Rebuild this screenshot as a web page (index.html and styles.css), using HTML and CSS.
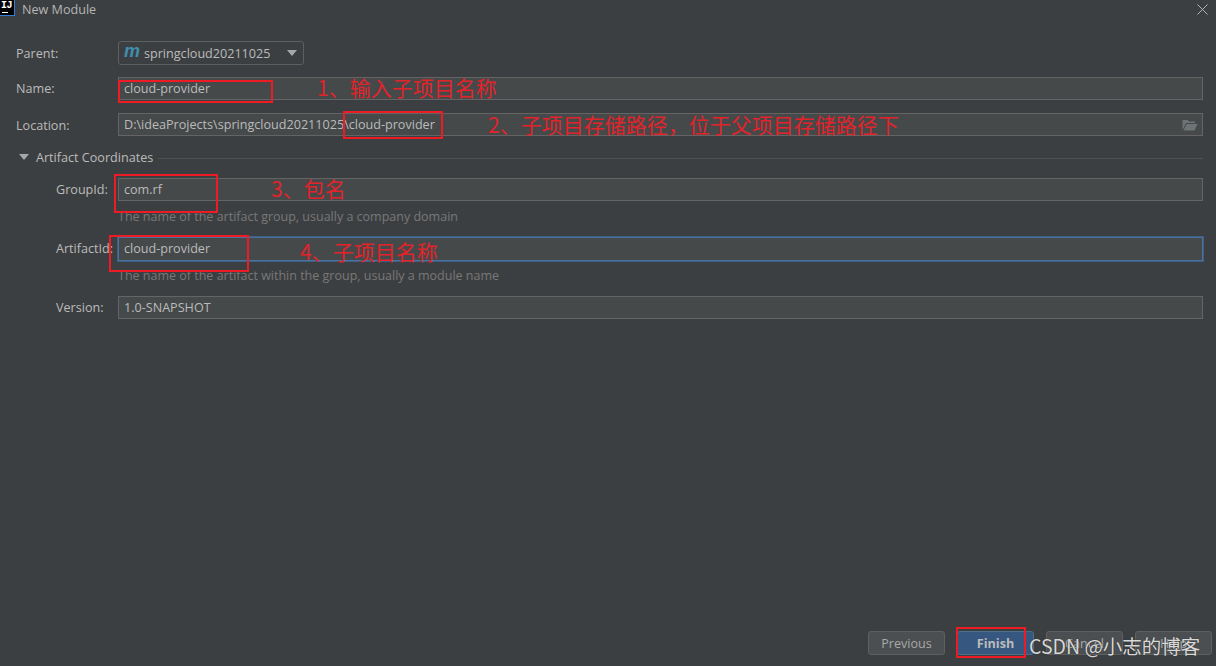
FILE: index.html
```html
<!DOCTYPE html>
<html lang="en">
<head>
<meta charset="utf-8">
<title>New Module</title>
<link rel="stylesheet" href="styles.css">
</head>
<body>
<div class="dialog">
  <header class="titlebar">
    <div class="logo"><span class="logo-text">IJ</span><span class="logo-bar"></span></div>
    <span class="title">New Module</span>
    <svg class="close" width="11" height="11" viewBox="0 0 11 11"><path d="M0.5 0.5L10.5 10.5M10.5 0.5L0.5 10.5" stroke="#b4b4b4" stroke-width="1" fill="none"/></svg>
  </header>

  <main class="form">
    <div class="row row-parent">
      <label class="label label-low">Parent:</label>
      <div class="select">
        <span class="maven">m</span>
        <span class="select-text">springcloud20211025</span>
        <span class="arrow"></span>
      </div>
    </div>
    <div class="row row-name">
      <label class="label">Name:</label>
      <div class="field">cloud-provider</div>
    </div>
    <div class="row row-location">
      <label class="label label-low">Location:</label>
      <div class="field field-loc">
        <span>D:\ideaProjects\springcloud20211025\cloud-provider</span>
        <svg class="folder" width="16" height="12" viewBox="0 0 16 12"><path d="M0.5 1H5.5L7 2.5H13V4H4L0.5 11Z" fill="#6e7476"/><path d="M4.5 5H15.5L12.5 11.5H1.5Z" fill="#6e7476"/></svg>
      </div>
    </div>
    <div class="section">
      <span class="tri"></span>
      <span class="section-title">Artifact Coordinates</span>
      <span class="rule"></span>
    </div>
    <div class="nested">
      <div class="row row-group">
        <label class="label label-n">GroupId:</label>
        <div class="field">com.rf</div>
      </div>
      <p class="hint hint-1">The name of the artifact group, usually a company domain</p>
      <div class="row row-artifact">
        <label class="label label-n">ArtifactId:</label>
        <div class="field field-focus">cloud-provider</div>
      </div>
      <p class="hint hint-2">The name of the artifact within the group, usually a module name</p>
      <div class="row row-version">
        <label class="label label-n">Version:</label>
        <div class="field">1.0-SNAPSHOT</div>
      </div>
    </div>
  </main>

  <footer class="footer">
    <button class="btn">Previous</button>
    <button class="btn btn-primary">Finish</button>
    <button class="btn">Cancel</button>
    <button class="btn">Help</button>
  </footer>

  <span class="mark mark-1"></span>
  <span class="mark mark-2"></span>
  <span class="mark mark-3"></span>
  <span class="mark mark-4"></span>
  <span class="mark mark-5"></span>
  <span class="note note-1">1、输入子项目名称</span>
  <span class="note note-2">2、子项目存储路径，位于父项目存储路径下</span>
  <span class="note note-3">3、包名</span>
  <span class="note note-4">4、子项目名称</span>
  <span class="watermark">CSDN @小志的博客</span>
</div>
</body>
</html>
```
FILE: styles.css
```css
* { box-sizing: border-box; }
html, body { margin: 0; padding: 0; }
body { background: #3c3f41; }

.dialog {
  position: relative;
  width: 1216px;
  height: 666px;
  overflow: hidden;
  display: flex;
  flex-direction: column;
  background: #3c3f41;
  color: #bbbbbb;
  font-family: "Open Sans", "Noto Sans", sans-serif;
  font-size: 12.6px;
}

.titlebar {
  height: 41px;
  flex: none;
  display: flex;
  align-items: flex-start;
}
.logo {
  width: 15px;
  height: 16px;
  flex: none;
  background: #000;
  border: 1px solid #2f7fd8;
  border-left: 0;
  border-top: 0;
}
.logo-text {
  display: block;
  color: #fff;
  font: bold 10px/10px "Liberation Mono", monospace;
  padding: 1px 0 0 1px;
  letter-spacing: -0.5px;
}
.logo-bar {
  display: block;
  width: 6px;
  height: 1px;
  background: #fff;
  margin: 1px 0 0 2px;
}
.title { margin: 1px 0 0 7px; line-height: 18px; color: #b5b5b5; }
.close { margin: 4px 8px 0 auto; }

.form { padding: 0 13px 0 16px; }
.row { display: flex; align-items: center; height: 23px; }
.label { width: 102px; flex: none; line-height: 18px; }
.label-low { padding-top: 2px; }
.label-n { width: 62px; }

.row-parent { height: 24px; }
.row-name { margin-top: 12px; }
.row-location { margin-top: 13px; }

.select {
  width: 186px;
  height: 24px;
  display: flex;
  align-items: center;
  border: 1px solid #5e6060;
  border-radius: 3px;
  background: #3c3f41;
  padding-left: 5px;
}
.maven {
  font: italic bold 18px/20px "Liberation Sans", sans-serif;
  color: #3f8fae;
  width: 20px;
  margin-top: -4px;
}
.select-text { white-space: nowrap; }
.arrow {
  margin-left: auto;
  margin-right: 6px;
  width: 0;
  height: 0;
  border-left: 5px solid transparent;
  border-right: 5px solid transparent;
  border-top: 6px solid #a8a8a8;
}

.field {
  flex: 1;
  height: 23px;
  display: flex;
  align-items: center;
  justify-content: space-between;
  padding: 0 5px;
  background: #45494a;
  border: 1px solid #646464;
  line-height: 18px;
  white-space: nowrap;
}
.field-focus {
  height: 24px;
  background: #45494a;
  border: 1px solid #4a709c;
  box-shadow: 0 0 0 1px #3d6185;
}
.folder { margin-right: -1px; }

.section {
  height: 18px;
  margin-top: 12px;
  display: flex;
  align-items: center;
  padding-left: 3px;
}
.tri {
  width: 0;
  height: 0;
  border-left: 5px solid transparent;
  border-right: 5px solid transparent;
  border-top: 6px solid #a8a8a8;
  margin-right: 7px;
}
.section-title { white-space: nowrap; margin-right: 5px; }
.rule { flex: 1; height: 1px; background: #515151; margin-top: 2px; }

.nested { padding-left: 40px; }
.row-group { margin-top: 12px; }
.row-artifact { margin-top: 11px; height: 24px; }
.row-version { margin-top: 11px; }
.hint {
  margin: 7px 0 0 62px;
  height: 18px;
  line-height: 18px;
  color: #787878;
  font-size: 12.5px;
}
.hint-2 { margin-top: 6px; }

.footer {
  margin-top: auto;
  padding: 0 4px 11px 0;
  display: flex;
  justify-content: flex-end;
  gap: 12px;
}
.btn {
  width: 77px;
  height: 24px;
  padding: 2px 0 0;
  border: 1px solid #5e6060;
  border-radius: 3px;
  background: #4b4f51;
  color: #a8a8a8;
  font: 12.6px/18px "Open Sans", "Noto Sans", sans-serif;
}
.btn-primary {
  background: #365880;
  border-color: #4c708c;
  color: #bbbbbb;
  font-weight: 700;
}

.mark { position: absolute; border: 2px solid #ed1c24; }
.mark-1 { left: 118px; top: 80px; width: 155px; height: 23px; }
.mark-2 { left: 343px; top: 111px; width: 100px; height: 28px; }
.mark-3 { left: 114px; top: 174px; width: 104px; height: 39px; }
.mark-4 { left: 109px; top: 235px; width: 140px; height: 37px; }
.mark-5 { left: 956px; top: 627px; width: 70px; height: 31px; }

.note {
  position: absolute;
  color: #e3232a;
  font: 21px/28px "Noto Sans CJK SC", "Noto Sans", sans-serif;
  white-space: nowrap;
}
.note-1 { left: 317px; top: 73px; }
.note-2 { left: 488px; top: 110px; }
.note-3 { left: 271px; top: 174px; }
.note-4 { left: 300px; top: 237px; }

.watermark {
  position: absolute;
  left: 1029px;
  top: 632px;
  color: #d8d8d8;
  font: 19.5px/28px "Noto Sans CJK SC", "Noto Sans", sans-serif;
  text-shadow: 0 0 1px #222;
  white-space: nowrap;
}
```
